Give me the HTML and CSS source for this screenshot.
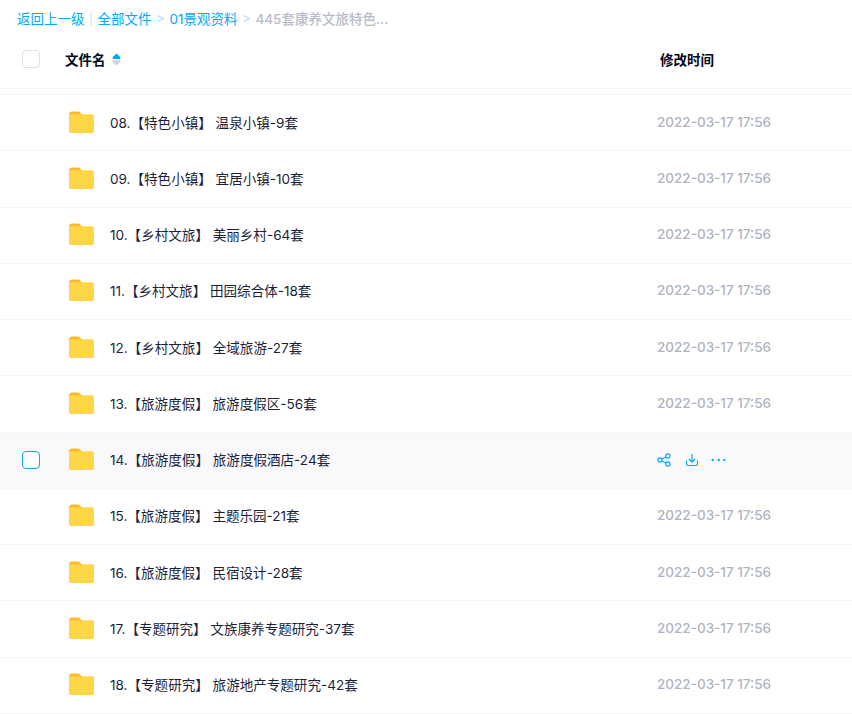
FILE: index.html
```html
<!DOCTYPE html>
<html lang="zh">
<head>
<meta charset="utf-8">
<title>文件列表</title>
<link rel="stylesheet" href="styles.css">
</head>
<body>
<svg class="defs" width="0" height="0" aria-hidden="true">
  <symbol id="folder" viewBox="1 0 26 22">
    <path d="M1 3.500C1 1.900 2.200 .5 4 .5h5.600c1.200 0 2 .5 2.800 1.300L14.400 4H1z" fill="#fdb92c"/>
    <path d="M1 5c0-1 .8-1.700 1.700-1.700H24.300c1.100 0 1.700.9 1.700 2V20c0 1.100-.7 2-1.800 2H2.800C1.700 22 1 21.100 1 20z" fill="#ffd646"/>
  </symbol>
</svg>
<nav class="crumbs">
  <a>返回上一级</a><span class="bar">|</span><a>全部文件</a><span class="sep">&gt;</span><a>01景观资料</a><span class="sep">&gt;</span><span class="current">445套康养文旅特色...</span>
</nav>
<div class="head">
  <span class="check-cell"><span class="check"></span></span>
  <span class="col-name">文件名<svg class="sort" viewBox="0 0 9 13"><path class="up" d="M4.500 .5C6 2 8.500 3.500 8.500 5c0 .6-.4 1-1 1h-6c-.6 0-1-.4-1-1C.5 3.500 3 2 4.500 .5z"/><path class="down" d="M4.500 12.500C6 11 8.500 9.500 8.500 8c0-.6-.4-1-1-1h-6c-.6 0-1 .4-1 1 0 1.500 2.500 3 4 4.500z"/></svg></span>
  <span class="col-time">修改时间</span>
</div>
<div class="list">
  <div class="row"><span class="check-cell"></span><svg class="folder"><use href="#folder"/></svg><span class="name">08.【特色小镇】 温泉小镇-9套</span><span class="time">2022-03-17 17:56</span></div>
  <div class="row"><span class="check-cell"></span><svg class="folder"><use href="#folder"/></svg><span class="name">09.【特色小镇】 宜居小镇-10套</span><span class="time">2022-03-17 17:56</span></div>
  <div class="row"><span class="check-cell"></span><svg class="folder"><use href="#folder"/></svg><span class="name">10.【乡村文旅】 美丽乡村-64套</span><span class="time">2022-03-17 17:56</span></div>
  <div class="row"><span class="check-cell"></span><svg class="folder"><use href="#folder"/></svg><span class="name">11.【乡村文旅】 田园综合体-18套</span><span class="time">2022-03-17 17:56</span></div>
  <div class="row"><span class="check-cell"></span><svg class="folder"><use href="#folder"/></svg><span class="name">12.【乡村文旅】 全域旅游-27套</span><span class="time">2022-03-17 17:56</span></div>
  <div class="row"><span class="check-cell"></span><svg class="folder"><use href="#folder"/></svg><span class="name">13.【旅游度假】 旅游度假区-56套</span><span class="time">2022-03-17 17:56</span></div>
  <div class="row hover"><span class="check-cell"><span class="check active"></span></span><svg class="folder"><use href="#folder"/></svg><span class="name">14.【旅游度假】 旅游度假酒店-24套</span>
    <span class="actions">
      <svg viewBox="0 0 14 14"><circle cx="3" cy="7" r="2.100"/><circle cx="10.800" cy="3" r="2.100"/><circle cx="10.800" cy="11" r="2.100"/><path d="M4.900 6 8.900 4M4.900 8l4 2"/></svg>
      <svg viewBox="0 0 14 14"><path d="M7 1v8M3.800 6 7 9.200 10.200 6M1.500 7.500v3.300c0 1 .7 1.700 1.700 1.700h7.600c1 0 1.700-.7 1.700-1.700V7.500"/></svg>
      <svg class="more" viewBox="0 0 15 14"><circle cx="1.700" cy="7" r="1.200"/><circle cx="7.700" cy="7" r="1.200"/><circle cx="13.300" cy="7" r="1.200"/></svg>
    </span></div>
  <div class="row"><span class="check-cell"></span><svg class="folder"><use href="#folder"/></svg><span class="name">15.【旅游度假】 主题乐园-21套</span><span class="time">2022-03-17 17:56</span></div>
  <div class="row"><span class="check-cell"></span><svg class="folder"><use href="#folder"/></svg><span class="name">16.【旅游度假】 民宿设计-28套</span><span class="time">2022-03-17 17:56</span></div>
  <div class="row"><span class="check-cell"></span><svg class="folder"><use href="#folder"/></svg><span class="name">17.【专题研究】 文族康养专题研究-37套</span><span class="time">2022-03-17 17:56</span></div>
  <div class="row"><span class="check-cell"></span><svg class="folder"><use href="#folder"/></svg><span class="name">18.【专题研究】 旅游地产专题研究-42套</span><span class="time">2022-03-17 17:56</span></div>
</div>
</body>
</html>
```
FILE: styles.css
```css
* { box-sizing: border-box; }
html, body { margin: 0; height: 100%; overflow: hidden; background: #fff; }
body { font-family: Inter, "Noto Sans CJK SC", sans-serif; font-size: 13.5px; color: #1c1f3a; }
.defs { position: absolute; }
.crumbs { display: flex; align-items: center; height: 36px; padding-left: 17px; font-weight: 400; color: #06a7ff; white-space: nowrap; }
.bar { margin: 0 4.500px; color: #c9e6fb; font-size: 12px; }
.sep { margin: 0 4.500px; color: #bcd9f2; }
.current { color: #b8bbc9; font-weight: 500; }
.head { display: flex; align-items: center; height: 53px; padding-bottom: 7px; border-bottom: 1px solid #f4f5f7; font-weight: 700; color: #03081a; }
.check-cell { flex: none; width: 69px; padding-left: 22px; display: flex; }
.check { width: 18px; height: 18px; border: 1px solid #dddfe8; border-radius: 4px; background: #fff; }
.check.active { border-color: #06a7ff; }
.head .check-cell { width: 65px; }
.col-name { flex: none; width: 595px; display: flex; align-items: center; }
.sort { width: 9px; height: 13px; margin: 2px 0 0 6px; }
.sort .up { fill: #06a7ff; }
.sort .down { fill: #d3d5de; }
.list { margin-top: 5px; border-top: 1px solid #f4f5f7; }
.row { display: flex; align-items: center; height: 56.25px; padding-bottom: 2px; border-bottom: 1px solid #f5f6f8; white-space: pre; }
.row.hover { background: #f9f9fc; border-bottom-color: #f9f9fc; }
.row.hover .check-cell { margin-top: 2px; }
.folder { flex: none; width: 26px; height: 22px; }
.name { flex: none; width: 547px; margin-left: 15px; font-size: 13.550px; font-weight: 400; }
.time { color: #afb3c3; font-size: 13.500px; font-weight: 500; }
.actions { display: flex; gap: 14px; margin-top: 2px; }
.actions svg { width: 14px; height: 14px; fill: none; stroke: #06a7ff; stroke-width: 1.200; }
.actions .more { width: 15px; margin-left: -2px; fill: #06a7ff; stroke: none; }
```
